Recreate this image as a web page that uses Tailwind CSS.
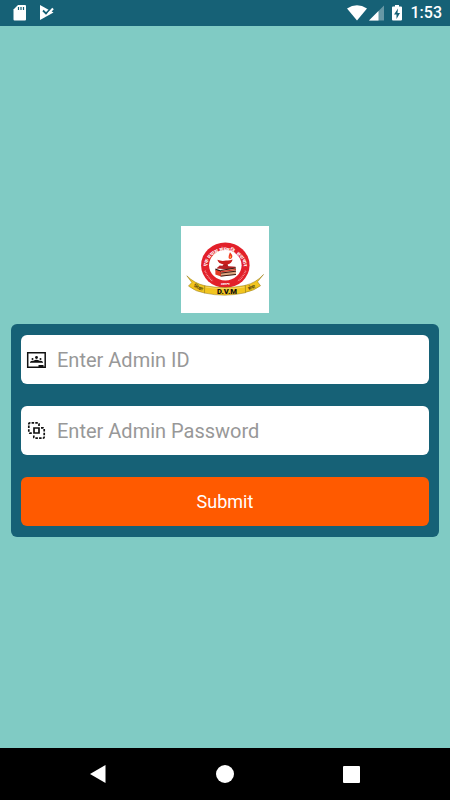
<!DOCTYPE html>
<html lang="en">
<head>
    <meta charset="UTF-8">
    <meta name="viewport" content="width=device-width, initial-scale=1.0">
    <title>Admin Login</title>
    <script src="https://cdn.jsdelivr.net/npm/@tailwindcss/browser@4"></script>
</head>
<body class="flex flex-col min-h-screen bg-[#80cbc4] font-[Roboto,sans-serif]">

<!-- Status bar -->
<header class="flex justify-between items-center h-[26px] px-3 pr-2 bg-[#166176] text-white">
    <div class="flex items-center gap-3">
        <svg class="w-4 h-4" viewBox="0 0 16 16" fill="none">
            <path fill="#fff" d="M6 0h7q1 0 1 1v13.500q0 1-1 1H2.500q-1 0-1-1V4.500z"/>
            <path stroke="#166176" stroke-width="1.200" d="M6.500 2v3M9 2v3M11.500 2v3"/>
        </svg>
        <svg class="w-4 h-4" viewBox="0 0 16 16" fill="none">
            <path fill="#fff" d="M0 0 13.500 7.500 0 15z"/>
            <path stroke="#166176" stroke-width="1.800" d="m3 5.500 3 3L11.500 3"/>
            <path stroke="#fff" stroke-width="2" d="m8 9 5-5.500"/>
        </svg>
    </div>
    <div class="flex items-center">
        <svg class="w-5 h-4" viewBox="0 0 20 16" fill="#fff">
            <path d="M0 3.500Q10-3 20 3.500L10 15.500z"/>
        </svg>
        <svg class="w-4 h-4 ml-0.5" viewBox="0 0 16 16">
            <path fill="#fff" fill-opacity=".35" d="M15 .5v15H0z"/>
            <path fill="#fff" d="M9.500 6v9.500H0z"/>
        </svg>
        <svg class="w-3 h-4 ml-1.5" viewBox="0 0 12 16">
            <path fill="#fff" d="M4 0h4v1.500h2q1 0 1 1v12q0 1-1 1H2q-1 0-1-1v-12q0-1 1-1h2z"/>
            <path fill="#166176" d="M7 3.500 3 9.500h2.500V14L9 8H6.500z"/>
        </svg>
        <span class="ml-2 text-base leading-5 font-medium">1:53</span>
    </div>
</header>

<!-- Login -->
<main class="flex-1 flex flex-col items-center justify-center gap-[11px] px-[11px] pb-[11px]">
    <svg class="w-[88px] h-[87px] bg-white" viewBox="18 18 264 262" role="img" aria-label="D.V.M">
        <defs>
            <path id="ring-top" d="M101 168A56 52 0 1 1 201 168"/>
        </defs>
        <!-- Ring -->
        <ellipse cx="151" cy="136" rx="73" ry="68" fill="#e2202a"/>
        <ellipse cx="151" cy="136" rx="49" ry="46" fill="#fff"/>
        <text fill="#fff" font-size="15" font-weight="700" font-family="Noto Sans, sans-serif" text-anchor="middle">
            <textPath href="#ring-top" startOffset="50%">एक प्रयास संस्कृति, सदाचार</textPath>
        </text>
        <path d="M90 153q6 18 24 32M212 153q-6 18-24 32" fill="none" stroke="#f6b0b0" stroke-width="5" stroke-dasharray="2 3"/>
        <text x="151" y="195" fill="#fff" font-size="9" font-weight="700" font-family="Noto Sans, sans-serif" text-anchor="middle">स्थापना</text>
        <!-- Lamp -->
        <path fill="#f03a20" d="M165 97q11 10 5 18-5 5-9-1-1-5 4-17z"/>
        <path fill="#ffd23c" d="M166 106q4 6 0 9-4-2 0-9z"/>
        <path fill="#c8201d" d="M127 120q13 5 26 2 11 1 20-3-3 12-15 15v7h-12v-7q-16-2-19-14z"/>
        <path fill="#b2191b" d="M145 134h12l4 8h-21z"/>
        <!-- Books -->
        <path fill="#b52324" d="m134 137 48 4-7 9-51-4z"/>
        <path fill="#d9a47e" d="m137 151 46-7v21l-45 5z"/>
        <path fill="#281312" d="m121 146 17 6v5l-17-6z"/>
        <path fill="#e33a26" d="m121 150 17 6v14l-17-6z"/>
        <path fill="none" stroke="#3b1714" stroke-width="3" d="m137 152 46-8m-46 16 46-6m-46 15 46-5"/>
        <path fill="none" stroke="#d52a24" stroke-width="3" d="m138 156 45-7"/>
        <!-- Ribbon -->
        <path fill="#f2c51f" stroke="#8d7415" stroke-width="1.500" d="m35 168 15 20-10 11q22 17 49 21l1-22q-32-7-55-30zm231-4-18 22 9 12q-20 15-46 20l-1-21q34-8 56-33z"/>
        <path fill="#f2c51f" stroke="#8d7415" stroke-width="1.500" d="M89 198q60 11 122-1l1 22q-62 14-124 1z"/>
        <path fill="#fff" fill-opacity=".3" d="M91 200q59 10 118 0v3q-59 10-118 0z"/>
        <text x="156" y="223" fill="#111" font-size="23" font-weight="900" font-family="Roboto, sans-serif" text-anchor="middle">D.V.M</text>
        <text x="70" y="208" transform="rotate(23 70 203)" fill="#332b08" font-size="14" font-weight="600" font-family="Noto Sans, sans-serif" text-anchor="middle">शिक्षा</text>
        <text x="230" y="208" transform="rotate(-20 230 203)" fill="#332b08" font-size="14" font-weight="600" font-family="Noto Sans, sans-serif" text-anchor="middle">सेवा</text>
    </svg>

    <form class="flex flex-col gap-[22px] w-full rounded-md bg-[#166176] px-[10px] py-[11px]">
        <div class="flex items-center gap-[11px] h-[49px] px-[5px] rounded-md bg-white">
            <label for="admin-id" aria-label="Admin ID">
                <svg class="w-5 h-5" viewBox="0 0 20 20" fill="#111">
                    <path fill="none" stroke="#111" stroke-width="1.500" d="M1.700 2.700h17.500v14.500H1.700z"/>
                    <circle cx="10.500" cy="7.500" r="1.400"/>
                    <circle cx="6.500" cy="9" r="1"/>
                    <circle cx="14.500" cy="9" r="1"/>
                    <path d="M4 12.800V12q1-1.500 3.500-1.200 1.500-1 3-1t3 1Q16 10.500 17 12v.8zM12.500 15h5v2h-5z"/>
                </svg>
            </label>
            <input id="admin-id" type="text" placeholder="Enter Admin ID"
                   class="flex-1 min-w-0 text-xl leading-6 text-black placeholder:text-[#989898] outline-none">
        </div>
        <div class="flex items-center gap-[11px] h-[49px] px-[5px] rounded-md bg-white">
            <label for="admin-password" aria-label="Admin Password">
                <svg class="w-5 h-5" viewBox="0 0 20 20" fill="none" stroke="#111" stroke-width="1.700">
                    <path d="M8 7h5v5H8z"/>
                    <path stroke-dasharray="2.500 1.200" d="M13 5V3q0-1.200-1.200-1.200H4Q2.800 1.800 2.800 3v8q0 1.200 1.200 1.200h2"/>
                    <path stroke-dasharray="2.500 1.200" d="M15 6.800h2q1.200 0 1.200 1.200v8q0 1.200-1.200 1.200H9q-1.200 0-1.200-1.200v-2"/>
                </svg>
            </label>
            <input id="admin-password" type="password" placeholder="Enter Admin Password"
                   class="flex-1 min-w-0 text-xl leading-6 text-black placeholder:text-[#989898] outline-none">
        </div>
        <button type="submit" class="h-[49px] rounded-md bg-[#ff5a00] text-lg text-white">Submit</button>
    </form>
</main>

<!-- Navigation bar -->
<nav class="grid grid-cols-[1fr_auto_1fr] items-center h-[52px] px-[90px] bg-black">
    <button type="button" aria-label="Back" class="justify-self-start">
        <svg class="w-4 h-[18px]" viewBox="0 0 16 18" fill="#fff"><path d="M15.500 0v18L0 9z"/></svg>
    </button>
    <button type="button" aria-label="Home">
        <svg class="w-[18px] h-[18px]" viewBox="0 0 18 18" fill="#fff"><circle cx="9" cy="9" r="9"/></svg>
    </button>
    <button type="button" aria-label="Recent apps" class="justify-self-end">
        <svg class="w-[17px] h-[17px]" viewBox="0 0 17 17" fill="#fff"><rect width="17" height="17" rx="1"/></svg>
    </button>
</nav>

</body>
</html>
